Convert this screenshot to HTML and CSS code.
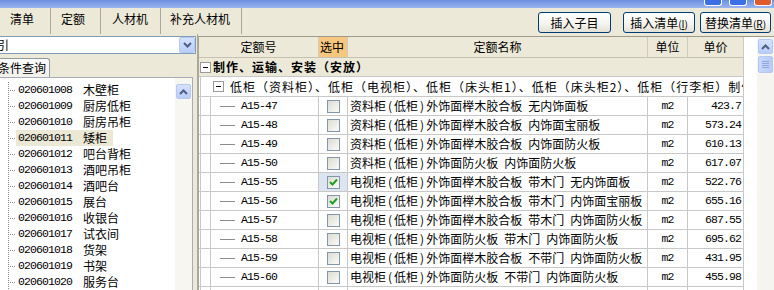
FILE: index.html
```html
<!DOCTYPE html>
<html>

<head>
    <meta charset="UTF-8">
    <title>定额库</title>
    <link rel="stylesheet" href="styles.css">
</head>

<body>
    <div class="titlebar">
        <span class="capbtn"></span>
        <span class="capbtn"></span>
        <span class="capbtn close"></span>
    </div>

    <div class="topbar">
        <div class="tabs">
            <span class="tab t1">清单</span>
            <span class="tab t2">定额</span>
            <span class="tab t3">人材机</span>
            <span class="tab t4">补充人材机</span>
        </div>
        <div class="actions">
            <button class="btn b1">插入子目</button>
            <button class="btn b2">插入清单<small>(<u>I</u>)</small></button>
            <button class="btn b3">替换清单<small>(<u>R</u>)</small></button>
        </div>
    </div>

    <div class="main">
        <!-- 左侧: 定额章节树 -->
        <div class="left">
            <div class="combo">
                <span class="combo-text">引</span>
                <span class="drop">
                    <svg width="9" height="6" viewBox="0 0 9 6"><polyline points="1,1 4.5,4.5 8,1" fill="none" stroke="#4d6185" stroke-width="2"/></svg>
                </span>
            </div>
            <div class="qtabs"><span class="qtab">条件查询</span></div>
            <div class="treebox">
                <div class="tree">
                    <div class="node"><span class="conn"></span><span class="item"><span class="num">020601008</span>木壁柜</span></div>
                    <div class="node"><span class="conn"></span><span class="item"><span class="num">020601009</span>厨房低柜</span></div>
                    <div class="node"><span class="conn"></span><span class="item"><span class="num">020601010</span>厨房吊柜</span></div>
                    <div class="node"><span class="conn"></span><span class="item current"><span class="num">020601011</span>矮柜</span></div>
                    <div class="node"><span class="conn"></span><span class="item"><span class="num">020601012</span>吧台背柜</span></div>
                    <div class="node"><span class="conn"></span><span class="item"><span class="num">020601013</span>酒吧吊柜</span></div>
                    <div class="node"><span class="conn"></span><span class="item"><span class="num">020601014</span>酒吧台</span></div>
                    <div class="node"><span class="conn"></span><span class="item"><span class="num">020601015</span>展台</span></div>
                    <div class="node"><span class="conn"></span><span class="item"><span class="num">020601016</span>收银台</span></div>
                    <div class="node"><span class="conn"></span><span class="item"><span class="num">020601017</span>试衣间</span></div>
                    <div class="node"><span class="conn"></span><span class="item"><span class="num">020601018</span>货架</span></div>
                    <div class="node"><span class="conn"></span><span class="item"><span class="num">020601019</span>书架</span></div>
                    <div class="node"><span class="conn"></span><span class="item"><span class="num">020601020</span>服务台</span></div>
                </div>
                <div class="vscroll small">
                    <span class="sbtn">
                        <svg width="9" height="6" viewBox="0 0 9 6"><polyline points="1,5 4.5,1.5 8,5" fill="none" stroke="#4d6185" stroke-width="2"/></svg>
                    </span>
                </div>
            </div>
        </div>

        <!-- 右侧: 定额列表 -->
        <div class="right">
            <div class="pane">
                <div class="grid">
                    <div class="c h">定额号</div>
                    <div class="c h pick">选中</div>
                    <div class="c h">定额名称</div>
                    <div class="c h">单位</div>
                    <div class="c h">单价</div>

                    <div class="c span group"><span class="tog"></span>制作、运输、安装（安放）</div>
                    <div class="c span sub"><span class="tog"></span>低柜（资料柜）、低柜（电视柜）、低柜（床头柜1）、低柜（床头柜2）、低柜（行李柜）制作、运输、安装</div>

                    <div class="c code">A15-47</div><div class="c chk"><span class="box"></span></div><div class="c name">资料柜<span class="p">(</span>低柜<span class="p">)</span>外饰面榉木胶合板&ensp;无内饰面板</div><div class="c unit">m2</div><div class="c price">423.7</div>
                    <div class="c code">A15-48</div><div class="c chk"><span class="box"></span></div><div class="c name">资料柜<span class="p">(</span>低柜<span class="p">)</span>外饰面榉木胶合板&ensp;内饰面宝丽板</div><div class="c unit">m2</div><div class="c price">573.24</div>
                    <div class="c code">A15-49</div><div class="c chk"><span class="box"></span></div><div class="c name">资料柜<span class="p">(</span>低柜<span class="p">)</span>外饰面榉木胶合板&ensp;内饰面防火板</div><div class="c unit">m2</div><div class="c price">610.13</div>
                    <div class="c code">A15-50</div><div class="c chk"><span class="box"></span></div><div class="c name">资料柜<span class="p">(</span>低柜<span class="p">)</span>外饰面防火板&ensp;内饰面防火板</div><div class="c unit">m2</div><div class="c price">617.07</div>
                    <div class="c code">A15-55</div><div class="c chk focus"><span class="box"><svg width="9" height="8" viewBox="0 0 9 8"><polyline points="1,4 3.5,6.5 8,1.5" fill="none" stroke="#21a121" stroke-width="2"/></svg></span></div><div class="c name">电视柜<span class="p">(</span>低柜<span class="p">)</span>外饰面榉木胶合板&ensp;带木门&ensp;无内饰面板</div><div class="c unit">m2</div><div class="c price">522.76</div>
                    <div class="c code">A15-56</div><div class="c chk"><span class="box"><svg width="9" height="8" viewBox="0 0 9 8"><polyline points="1,4 3.5,6.5 8,1.5" fill="none" stroke="#21a121" stroke-width="2"/></svg></span></div><div class="c name">电视柜<span class="p">(</span>低柜<span class="p">)</span>外饰面榉木胶合板&ensp;带木门&ensp;内饰面宝丽板</div><div class="c unit">m2</div><div class="c price">655.16</div>
                    <div class="c code">A15-57</div><div class="c chk"><span class="box"></span></div><div class="c name">电视柜<span class="p">(</span>低柜<span class="p">)</span>外饰面榉木胶合板&ensp;带木门&ensp;内饰面防火板</div><div class="c unit">m2</div><div class="c price">687.55</div>
                    <div class="c code">A15-58</div><div class="c chk"><span class="box"></span></div><div class="c name">电视柜<span class="p">(</span>低柜<span class="p">)</span>外饰面防火板&ensp;带木门&ensp;内饰面防火板</div><div class="c unit">m2</div><div class="c price">695.62</div>
                    <div class="c code">A15-59</div><div class="c chk"><span class="box"></span></div><div class="c name">电视柜<span class="p">(</span>低柜<span class="p">)</span>外饰面榉木胶合板&ensp;不带门&ensp;内饰面防火板</div><div class="c unit">m2</div><div class="c price">431.95</div>
                    <div class="c code">A15-60</div><div class="c chk"><span class="box"></span></div><div class="c name">电视柜<span class="p">(</span>低柜<span class="p">)</span>外饰面防火板&ensp;不带门&ensp;内饰面防火板</div><div class="c unit">m2</div><div class="c price">455.98</div>
                    <div class="c code"></div><div class="c chk"></div><div class="c name"></div><div class="c unit"></div><div class="c price"></div>
                </div>
                <div class="gap"></div>
                <div class="vscroll big">
                    <span class="sbtn">
                        <svg width="9" height="6" viewBox="0 0 9 6"><polyline points="1,5 4.5,1.5 8,5" fill="none" stroke="#4d6185" stroke-width="2"/></svg>
                    </span>
                    <span class="thumb"><i></i><i></i><i></i><i></i></span>
                </div>
            </div>
        </div>
    </div>
</body>

</html>
```

FILE: styles.css
```css
/* 基本样式 */
body {
    margin: 0;
    width: 774px;
    height: 290px;
    overflow: hidden;
    background: #ece9d8;
    font-family: "Noto Sans CJK SC", sans-serif;
    font-size: 12px;
    line-height: 16px;
    color: #000;
}

/* 标题栏 */
.titlebar {
    height: 8px;
    display: flex;
    justify-content: flex-end;
    align-items: flex-start;
    padding-right: 2px;
    background: linear-gradient(#6b8fe2, #9ab4ee);
}

.capbtn {
    width: 16px;
    height: 5px;
    margin-left: 7px;
    border: 1px solid #fff;
    border-top: none;
    border-radius: 0 0 3px 3px;
    background: #3c6fe6;
}

.capbtn.close {
    background: #e05a2e;
}

/* 页签和按钮 */
.topbar {
    height: 26px;
    display: flex;
    justify-content: space-between;
}

.tabs {
    display: flex;
}

.tab {
    box-sizing: border-box;
    display: flex;
    align-items: center;
    padding-bottom: 4px;
    border-right: 1px solid #aca899;
}

.t1 { width: 51px; padding-left: 10px; }
.t2 { width: 50px; padding-left: 10px; }
.t3 { width: 60px; padding-left: 11px; }
.t4 { width: 81px; padding-left: 9px; }

.actions {
    display: flex;
    align-items: flex-end;
    padding: 0 3px 1px 0;
}

.btn {
    box-sizing: border-box;
    height: 21px;
    padding: 0;
    border: 1px solid #003c74;
    border-radius: 3px;
    background: linear-gradient(#ffffff, #f4f3ee 60%, #e3e0d4);
    font-family: "Noto Sans CJK SC", sans-serif;
    font-size: 12px;
    line-height: 19px;
    color: #000;
}

.btn small {
    font-size: 10px;
}

.b1 { width: 73px; }
.b2 { width: 72px; margin-left: 12px; }
.b3 { width: 71px; margin-left: 5px; }

/* 主体 */
.main {
    display: flex;
    height: 256px;
}

.left {
    box-sizing: border-box;
    width: 198px;
    padding-top: 2px;
    border-right: 1px solid #aca899;
    display: flex;
    flex-direction: column;
}

.combo {
    box-sizing: border-box;
    width: 196px;
    height: 18px;
    border: 1px solid #7f9db9;
    border-left: none;
    background: #fff;
    display: flex;
    align-items: center;
}

.combo-text {
    flex: 1;
    margin-left: -3px;
}

.drop {
    box-sizing: border-box;
    width: 16px;
    height: 16px;
    border: 1px solid #b5c8f2;
    border-radius: 2px;
    background: linear-gradient(#d6e2fd, #b9cdf8);
    display: flex;
    align-items: center;
    justify-content: center;
}

.qtabs {
    height: 19px;
    margin-top: 4px;
    display: flex;
}

.qtab {
    box-sizing: border-box;
    width: 53px;
    margin-left: -3px;
    padding-left: 1px;
    border: 1px solid #919b9c;
    border-left: none;
    border-bottom: none;
    border-radius: 0 3px 0 0;
    background: linear-gradient(#fcfcfe, #f1f0ea);
    line-height: 17px;
}

.treebox {
    box-sizing: border-box;
    flex: 1;
    width: 193px;
    border-top: 1px solid #a5acb5;
    border-right: 1px solid #a5acb5;
    background: #fff;
    display: flex;
}

.tree {
    flex: 1;
    padding-top: 4px;
}

.node {
    height: 16px;
    display: flex;
}

.conn {
    width: 16px;
    background:
        repeating-linear-gradient(to bottom, #8a8a8a 0 1px, transparent 1px 2px) 8px 0 / 1px 100% no-repeat,
        repeating-linear-gradient(to right, #8a8a8a 0 1px, transparent 1px 2px) 10px 8px / 6px 1px no-repeat;
}

.item {
    display: flex;
    padding: 0 6px 0 2px;
    white-space: nowrap;
}

.item.current {
    background: #ebe8d6;
}

.num {
    width: 65px;
    font-family: "Liberation Mono", monospace;
    font-size: 11.5px;
    letter-spacing: -0.9px;
}

/* 滚动条 */
.vscroll {
    width: 17px;
    background: #f7f6f1;
    display: flex;
    flex-direction: column;
    align-items: center;
}

.vscroll.small {
    padding-top: 6px;
}

.vscroll.big {
    padding-top: 2px;
    background: #f5f4ee;
}

.sbtn {
    box-sizing: border-box;
    width: 15px;
    height: 15px;
    border: 1px solid #b5c8f2;
    border-radius: 2px;
    background: linear-gradient(#d6e2fd, #b9cdf8);
    display: flex;
    align-items: center;
    justify-content: center;
}

.thumb {
    box-sizing: border-box;
    width: 15px;
    height: 17px;
    margin-top: 2px;
    border: 1px solid #b5c8f2;
    border-radius: 2px;
    background: linear-gradient(to right, #c9d8fc, #b7cbf7);
    display: flex;
    flex-direction: column;
    align-items: center;
    justify-content: center;
    gap: 1px;
}

.thumb i {
    width: 7px;
    height: 1px;
    background: #8ea7dd;
}

/* 定额列表 */
.right {
    flex: 1;
    padding-top: 2px;
    display: flex;
    flex-direction: column;
}

.pane {
    flex: 1;
    display: flex;
    border-top: 1px solid #9d9a8c;
    border-left: 1px solid #aca899;
    background: #fff;
}

.grid {
    width: 545px;
    display: grid;
    grid-template-columns: 120px 29px 300px 40px 56px;
    grid-template-rows: 21px 19px 20px;
    grid-auto-rows: 19px;
    align-content: start;
}

.gap {
    width: 13px;
}

.c {
    box-sizing: border-box;
    border-right: 1px solid #c8c8c8;
    border-bottom: 1px solid #c8c8c8;
    display: flex;
    align-items: center;
    white-space: nowrap;
    overflow: hidden;
}

.h {
    justify-content: center;
    background: #ece9d8;
    border-right-color: #cfcbbb;
    border-bottom-color: #c5c2b2;
}

.h.pick {
    justify-content: flex-start;
    padding-left: 1px;
    background: #f7c77f;
}

.span {
    grid-column: 1 / -1;
}

.group {
    padding-left: 1px;
    background: #ece9d8;
    font-weight: bold;
    letter-spacing: 1px;
}

.sub {
    padding-left: 14px;
    letter-spacing: 1px;
    background: linear-gradient(#c8c8c8, #c8c8c8) 1px 0 / 1px 100% no-repeat;
}

.tog {
    box-sizing: border-box;
    width: 11px;
    height: 11px;
    margin-right: 2px;
    border: 1px solid #9a9a9a;
    background: linear-gradient(#000, #000) center / 5px 1px no-repeat, #fff;
    flex: none;
}

.sub .tog {
    margin-right: 6px;
}

.code {
    padding-left: 42px;
    font-family: "Liberation Mono", monospace;
    font-size: 11.5px;
    letter-spacing: -0.9px;
    background:
        linear-gradient(#c8c8c8, #c8c8c8) 1px 0 / 1px 100% no-repeat,
        linear-gradient(#c8c8c8, #c8c8c8) 11px 0 / 1px 100% no-repeat,
        linear-gradient(#8c8c8c, #8c8c8c) 21px 50% / 15px 1px no-repeat;
}

.chk {
    justify-content: center;
}

.chk.focus {
    background: #dde5f3;
}

.box {
    box-sizing: border-box;
    width: 13px;
    height: 13px;
    border: 1px solid #8595aa;
    background: linear-gradient(135deg, #dcdcd4, #fbfbf9);
    display: flex;
    align-items: center;
    justify-content: center;
}

.name {
    padding-left: 2px;
}

.name .p {
    margin: 0 2px;
}

.unit {
    justify-content: center;
    font-family: "Liberation Mono", monospace;
    font-size: 11.5px;
    letter-spacing: -0.9px;
}

.price {
    justify-content: flex-end;
    padding-right: 2px;
    font-family: "Liberation Mono", monospace;
    font-size: 11.5px;
    letter-spacing: -0.9px;
}
```
